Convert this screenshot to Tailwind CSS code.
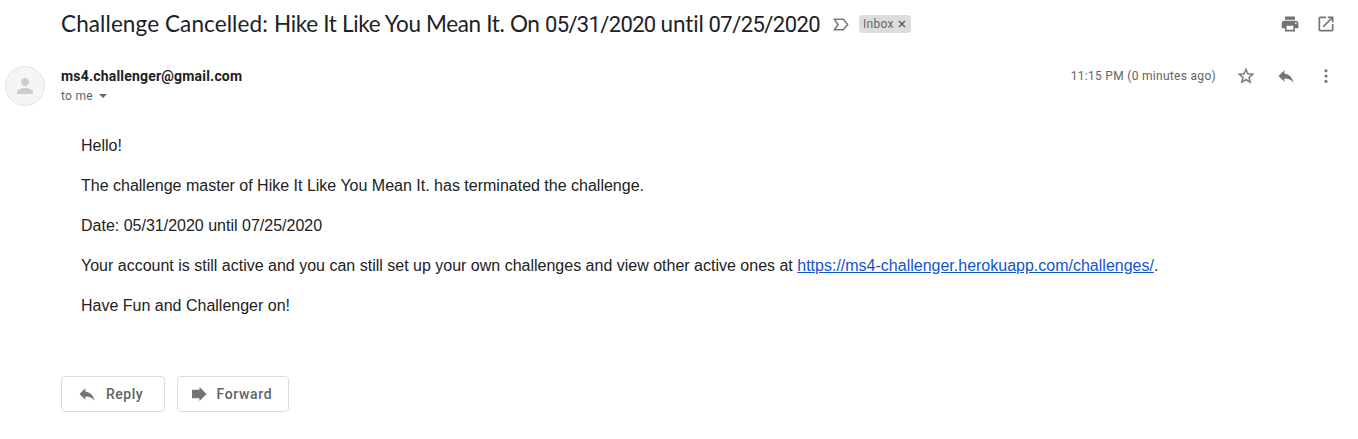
<!DOCTYPE html>
<html lang="en">
<head>
<meta charset="utf-8">
<title>Challenge Cancelled</title>
<script src="https://cdn.jsdelivr.net/npm/@tailwindcss/browser@4"></script>
</head>
<body class="h-[439px] overflow-hidden bg-white font-['Roboto',sans-serif] text-[#202124]">
<header class="flex h-12 items-center pl-[61px] pr-[22px]">
  <h1 class="flex w-[760px] items-baseline whitespace-nowrap font-['Lato',sans-serif] text-[22.5px] leading-7">
    <span class="w-[213px] tracking-[0.1px]">Challenge Cancelled:</span>
    <span class="w-[236px] tracking-[-0.34px]">Hike It Like You Mean It.</span>
    <span class="w-[35px] tracking-[-0.5px]">On</span>
    <span class="w-[115.500px] font-['Roboto',sans-serif] text-[22px] tracking-[-0.65px]">05/31/2020</span>
    <span class="w-[48px] tracking-[-0.1px]">until</span>
    <span class="font-['Roboto',sans-serif] text-[22px] tracking-[-0.55px]">07/25/2020</span>
  </h1>
  <svg class="ml-3 h-[13px] w-4" viewBox="0 0 16 13" fill="none" stroke="#777" stroke-width="1.5"><path d="M1.4 1.2H10.4L14.6 6.5L10.4 11.8H1.4L5 6.5Z"/></svg>
  <div class="ml-2.5 flex h-[18px] w-[52px] items-center gap-1 rounded bg-[#ddd] pl-1 text-[#666]">
    <span class="text-xs tracking-[0.3px]">Inbox</span>
    <svg class="size-2" viewBox="0 0 8 8" stroke="#666" stroke-width="1.7"><path d="M1 1L7 7M7 1L1 7"/></svg>
  </div>
  <div class="ml-auto flex gap-4 text-[#747474]">
    <svg class="size-5" viewBox="0 0 24 24" fill="currentColor"><path d="M19 8H5c-1.66 0-3 1.34-3 3v6h4v4h12v-4h4v-6c0-1.66-1.34-3-3-3zm-3 11H8v-5h8v5zm3-7c-.55 0-1-.45-1-1s.45-1 1-1 1 .45 1 1-.45 1-1 1zm-1-9H6v4h12V3z"/></svg>
    <svg class="size-5" viewBox="0 0 24 24" fill="currentColor"><path d="M19 19H5V5h7V3H5c-1.11 0-2 .9-2 2v14c0 1.1.89 2 2 2h14c1.1 0 2-.9 2-2v-7h-2v7zM14 3v2h3.59l-9.83 9.83 1.41 1.41L19 6.41V10h2V3h-7z"/></svg>
  </div>
</header>
<section class="mt-[18px] flex h-10 pl-[5px] pr-[22px]">
  <div class="flex size-10 items-center justify-center rounded-full border border-[#e4e4e4] bg-[#f5f5f5]">
    <svg class="size-6" viewBox="0 0 24 24" fill="#ccc"><path d="M12 12c2.2 0 4-1.8 4-4s-1.8-4-4-4-4 1.8-4 4 1.800 4 4 4zm0 2c-2.700 0-8 1.300-8 4v2h16v-2c0-2.700-5.300-4-8-4z"/></svg>
  </div>
  <div class="ml-4">
    <div class="h-5 text-sm leading-5 font-bold tracking-[0.2px]">ms4.challenger@gmail.com</div>
    <div class="flex items-center gap-1.5 text-xs leading-5 tracking-[0.3px] text-[#5f6368]">to me
      <svg class="h-1 w-2" viewBox="0 0 8 4" fill="#666"><path d="M0 0h8L4 4z"/></svg>
    </div>
  </div>
  <div class="ml-auto flex h-5 items-center text-[#747474]">
    <span class="mr-5 text-xs tracking-[0.3px] text-[#5f6368]">11:15 PM (0 minutes ago)</span>
    <div class="flex gap-5">
      <svg class="size-5" viewBox="0 0 24 24" fill="currentColor"><path stroke="currentColor" stroke-width=".2" d="M22 9.240l-7.190-.62L12 2 9.190 8.630 2 9.240l5.460 4.730L5.820 21 12 17.270 18.180 21l-1.630-7.030L22 9.240zM12 15.400l-3.760 2.270 1-4.280-3.320-2.880 4.380-.38L12 6.100l1.710 4.040 4.380.38-3.320 2.880 1 4.280L12 15.400z"/></svg>
      <svg class="size-5" viewBox="0 0 24 24" fill="currentColor"><path d="M10 9V5l-7 7 7 7v-4.100c5 0 8.500 1.600 11 5.100-1-5-4-10-11-11z"/></svg>
      <svg class="size-5" viewBox="0 0 24 24" fill="currentColor"><circle cx="12" cy="5.600" r="1.850"/><circle cx="12" cy="12" r="1.850"/><circle cx="12" cy="18.400" r="1.850"/></svg>
    </div>
  </div>
</section>
<main class="mt-[30px] flex flex-col gap-5 pl-[81px] font-['Liberation_Sans',Arial,sans-serif] text-base leading-5 text-[#222]">
  <p>Hello!</p>
  <p>The challenge master of Hike It Like You Mean It. has terminated the challenge.</p>
  <p>Date: 05/31/2020 until 07/25/2020</p>
  <p class="whitespace-nowrap">Your account is still active and you can still set up your own challenges and view other active ones at <a href="#" class="text-[#1155cc] underline">https://ms4-challenger.herokuapp.com/challenges/</a>.</p>
  <p>Have Fun and Challenger on!</p>
</main>
<footer class="mt-[60px] flex gap-3 pl-[61px] text-sm font-medium text-[#5f6368]">
  <button class="flex h-9 w-[104px] items-center rounded border border-[#dadce0] pl-[15px] tracking-[0.5px]">
    <svg class="mr-[9px] size-5" viewBox="0 0 24 24" fill="#747474"><path d="M10 9V5l-7 7 7 7v-4.100c5 0 8.500 1.600 11 5.100-1-5-4-10-11-11z"/></svg>Reply</button>
  <button class="flex h-9 w-28 items-center rounded border border-[#dadce0] pl-[13.5px] tracking-[0.65px]">
    <svg class="mr-[10px] h-3.5 w-[15px]" viewBox="0 0 15 14" fill="#747474"><path d="M0 2.800H7.500V0L14.500 7L7.500 14V11.200H0z"/></svg>Forward</button>
</footer>
</body>
</html>
